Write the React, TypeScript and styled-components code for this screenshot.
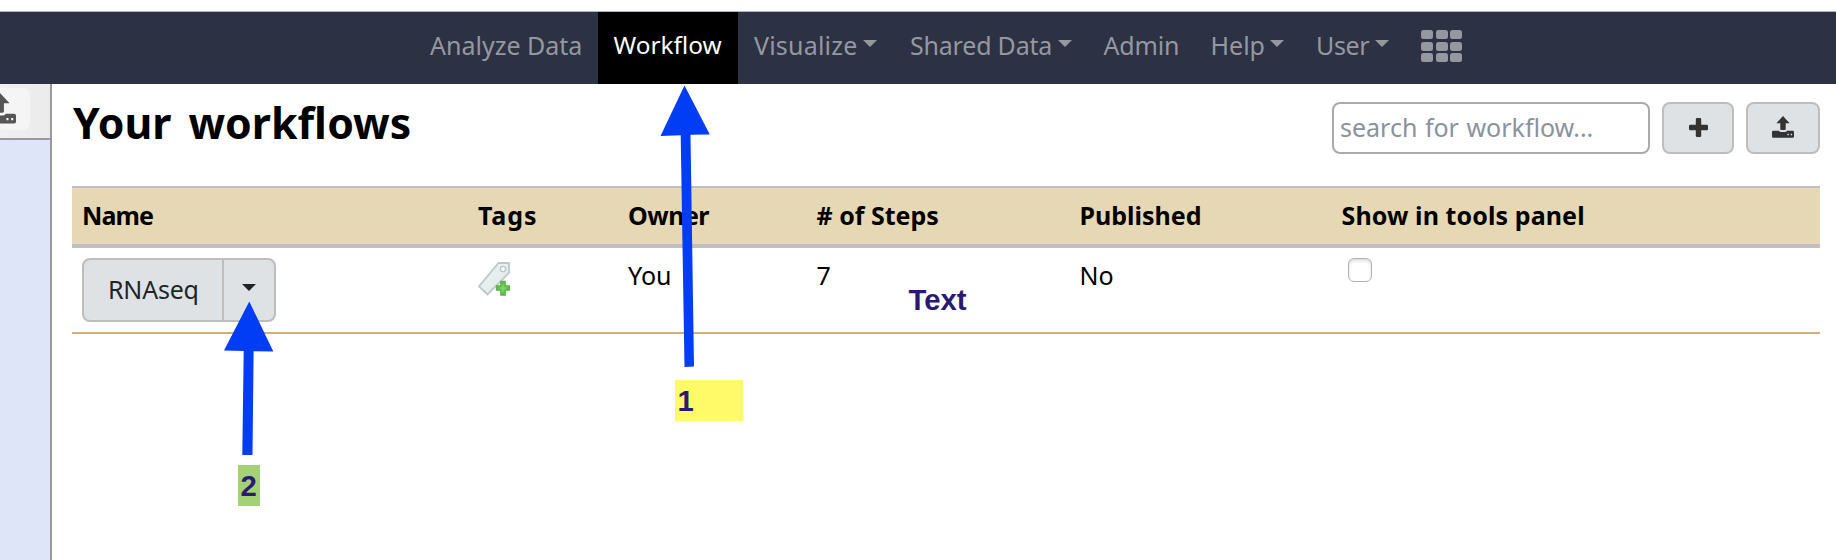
import React from "react";
import styled, { createGlobalStyle, css } from "styled-components";

const Global = createGlobalStyle`
  * { box-sizing: border-box; }
  body { margin: 0; background: #fff; color: #000; font: 25px/36px "Noto Sans", "Open Sans", sans-serif; }
  #root { height: 560px; overflow: hidden; }
`;

const Page = styled.div`
  position: relative;
  height: 560px;
  display: flex;
  flex-direction: column;
  overflow: hidden;
`;

const Masthead = styled.header`
  flex: none;
  height: 73px;
  margin-top: 11px;
  padding-left: 415px;
  border-top: 1px solid #b4b6bd;
  background: #2c3143;
  display: flex;
`;

const NavItem = styled.a<{ $width: number; $active?: boolean; $size?: number; $tracking?: number }>`
  width: ${(p) => p.$width}px;
  margin-right: ${(p) => (p.$active ? 1 : 0)}px;
  padding: 15px 0 0 ${(p) => (p.$active ? 15.5 : 15)}px;
  height: 72px;
  display: flex;
  white-space: pre;
  color: ${(p) => (p.$active ? "#fff" : "#9598a1")};
  background: ${(p) => (p.$active ? "#000" : "transparent")};
  font-size: ${(p) => p.$size ?? 25}px;
  letter-spacing: ${(p) => (p.$tracking ? `${p.$tracking}px` : "normal")};
`;

const Caret = styled.span`
  width: 0;
  height: 0;
  margin: 13px 0 0 5.5px;
  border: 7px solid transparent;
  border-top: 7.5px solid currentColor;
  border-bottom: 0;
`;

const AppGrid = styled.div`
  display: grid;
  grid-template-columns: repeat(3, 12px);
  grid-auto-rows: 9px;
  gap: 2.7px;
  margin: 18px 0 0 15px;
`;

const AppCell = styled.i`
  background: #9598a1;
  border-radius: 2.5px;
`;

const Body = styled.div`
  flex: 1;
  display: flex;
  min-height: 0;
`;

const Sidebar = styled.aside`
  width: 52px;
  border-right: 2px solid #999;
  background: #dfe5f9;
`;

const SidebarHead = styled.div`
  height: 56px;
  padding-top: 4px;
  border-bottom: 2px solid #999;
  background: linear-gradient(90deg, #f0f0f0, #ebebeb);
`;

const SidebarButton = styled.div`
  width: 30px;
  height: 42px;
  padding: 5px 14px 0 0;
  border-radius: 0 7px 7px 0;
  background: #f5f5f5;
  color: #555;
  overflow: hidden;
  display: flex;
  justify-content: flex-end;
`;

const Main = styled.main`
  flex: 1;
  padding: 18px 16px 0 20px;
`;

const TitleBar = styled.div`
  display: flex;
  align-items: flex-start;
  height: 84px;
`;

const Title = styled.h1`
  flex: 1;
  margin: -5px 0 0 1px;
  font-size: 42.8px;
  line-height: 52px;
  word-spacing: 6px;
`;

const Search = styled.input`
  width: 318px;
  height: 52px;
  padding: 0 0 3px 6px;
  border: 2px solid #aaa;
  border-radius: 8px;
  background: #fff;
  font: inherit;
  word-spacing: 1px;
  outline: none;
  &::placeholder { color: #8a929b; opacity: 1; }
`;

const buttonFace = css`
  border: 2px solid #bdbdbd;
  background: #dee2e5;
  color: #212529;
`;

const ToolButton = styled.button<{ $width: number }>`
  ${buttonFace}
  width: ${(p) => p.$width}px;
  height: 52px;
  margin-left: 12px;
  padding: 0 0 2px;
  border-radius: 8px;
  color: #333;
  display: flex;
  align-items: center;
  justify-content: center;
`;

const Table = styled.div`
  border-top: 2px solid #bfbfbf;
`;

const Row = styled.div<{ $head?: boolean }>`
  display: grid;
  grid-template-columns: 396px 150px 188.5px 263px 262px 1fr;
  padding-left: 10px;
  height: ${(p) => (p.$head ? 60 : 86)}px;
  border-bottom: ${(p) => (p.$head ? "4px solid #bfbfbf" : "2px solid #d3b06c")};
  background: ${(p) => (p.$head ? "#e7d8b5" : "#fff")};
  font-weight: ${(p) => (p.$head ? 700 : 400)};
`;

const Cell = styled.div<{ $top: number; $tracking?: number }>`
  padding-top: ${(p) => p.$top}px;
  letter-spacing: ${(p) => (p.$tracking ? `${p.$tracking}px` : "normal")};
  white-space: nowrap;
`;

const ButtonGroup = styled.div`
  ${buttonFace}
  display: flex;
  width: 194px;
  height: 64px;
  border-radius: 8px;
`;

const GroupName = styled.div`
  width: 140px;
  padding: 11px 0 0 24px;
  border-right: 2px solid #bdbdbd;
  letter-spacing: -0.2px;
`;

const GroupToggle = styled.div`
  flex: 1;
  display: flex;
  padding: 11px 0 0 12.5px;
`;

const Checkbox = styled.div`
  width: 24px;
  height: 24px;
  margin-left: 6.5px;
  border: 1.5px solid #b0b0b0;
  border-radius: 6px;
  box-shadow: inset 0 2px 3px #ddd;
`;

const Arrows = styled.svg`
  position: absolute;
  inset: 0;
  pointer-events: none;
`;

const Note = styled.div<{ $x: number; $y: number; $w: number; $fill?: string }>`
  position: absolute;
  left: ${(p) => p.$x}px;
  top: ${(p) => p.$y}px;
  width: ${(p) => p.$w}px;
  height: 41px;
  padding-left: 2.5px;
  background: ${(p) => p.$fill ?? "transparent"};
  color: #2a1a73;
  font: bold 29.3px/41px "Liberation Sans", sans-serif;
`;

const IconSvg = styled.svg`
  display: block;
  flex: none;
`;

function UploadIcon({ width, height }: { width: number; height: number }) {
  return (
    <IconSvg width={width} height={height} viewBox="0 0 22 22" preserveAspectRatio="none">
      <path
        fill="currentColor"
        fillRule="evenodd"
        d="M11 0 17.6 7.2H13.7V13.2Q13.7 14 12.9 14H9.1Q8.3 14 8.3 13.2V7.2H4.4ZM1.3 14.8H7Q7.6 16 9 16H13Q14.4 16 15 14.8H20.7Q22 14.8 22 16.1V20.4Q22 21.7 20.7 21.7H1.3Q0 21.7 0 20.4V16.1Q0 14.8 1.3 14.8ZM15.4 17.8V19.3H16.8V17.8ZM18.7 17.8V19.3H20.1V17.8Z"
      />
    </IconSvg>
  );
}

function PlusIcon() {
  return (
    <IconSvg width="19" height="19" viewBox="0 0 19 19">
      <path fill="currentColor" d="M8 0h3q1.2 0 1.2 1.2v5.6h5.6q1.2 0 1.2 1.2v3q0 1.2-1.2 1.2h-5.6v5.6q0 1.2-1.2 1.2H8q-1.2 0-1.2-1.2v-5.6H1.2Q0 12.2 0 11V8q0-1.2 1.2-1.2h5.6V1.2Q6.8 0 8 0z" />
    </IconSvg>
  );
}

function TagIcon() {
  return (
    <IconSvg width="32" height="34" viewBox="0 0 32 34">
      <defs>
        <linearGradient id="tagFace" x1="0" y1="0" x2="1" y2="1">
          <stop offset="0" stopColor="#f3f7f7" />
          <stop offset="1" stopColor="#dbe5e6" />
        </linearGradient>
        <radialGradient id="addFace">
          <stop offset="0" stopColor="#83dc68" />
          <stop offset="1" stopColor="#50b83f" />
        </radialGradient>
      </defs>
      <path d="M20.5 1H31V11L9.5 32.5 1 24.5Z" fill="url(#tagFace)" stroke="#bcc8ca" strokeWidth="1.8" />
      <circle cx="25" cy="7" r="2.6" fill="#fff" stroke="#b8c5c7" strokeWidth="1.4" />
      <path d="M22.8 19.5h4.4v4.3h4.300v4.400h-4.300v5h-4.400v-5h-4.300v-4.400h4.300z" fill="url(#addFace)" stroke="#5fb350" strokeWidth="1.3" />
    </IconSvg>
  );
}

export default function App() {
  return (
    <Page>
      <Global />
      <Masthead>
        <NavItem $width={183}>Analyze Data</NavItem>
        <NavItem $width={140} $active $size={24.4}>Workflow</NavItem>
        <NavItem $width={156} $tracking={0.2}>Visualize<Caret /></NavItem>
        <NavItem $width={193.5} $tracking={-0.2}>Shared Data<Caret /></NavItem>
        <NavItem $width={107} $tracking={-0.2}>Admin</NavItem>
        <NavItem $width={105.5}>Help<Caret /></NavItem>
        <NavItem $width={105} $tracking={-0.4}>User<Caret /></NavItem>
        <AppGrid>
          {Array.from({ length: 9 }, (_, i) => <AppCell key={i} />)}
        </AppGrid>
      </Masthead>
      <Body>
        <Sidebar>
          <SidebarHead>
            <SidebarButton><UploadIcon width={32} height={31} /></SidebarButton>
          </SidebarHead>
        </Sidebar>
        <Main>
          <TitleBar>
            <Title>Your workflows</Title>
            <Search placeholder="search for workflow..." />
            <ToolButton $width={72}><PlusIcon /></ToolButton>
            <ToolButton $width={74}><UploadIcon width={22} height={22} /></ToolButton>
          </TitleBar>
          <Table>
            <Row $head>
              <Cell $top={9} $tracking={-0.9}>Name</Cell>
              <Cell $top={9} $tracking={0.9}>Tags</Cell>
              <Cell $top={9} $tracking={-0.5}>Owner</Cell>
              <Cell $top={9}># of Steps</Cell>
              <Cell $top={9}>Published</Cell>
              <Cell $top={9} $tracking={0.1}>Show in tools panel</Cell>
            </Row>
            <Row>
              <Cell $top={10}>
                <ButtonGroup>
                  <GroupName>RNAseq</GroupName>
                  <GroupToggle><Caret /></GroupToggle>
                </ButtonGroup>
              </Cell>
              <Cell $top={14}><TagIcon /></Cell>
              <Cell $top={9}>You</Cell>
              <Cell $top={9}>7</Cell>
              <Cell $top={9}>No</Cell>
              <Cell $top={10}><Checkbox /></Cell>
            </Row>
          </Table>
        </Main>
      </Body>
      <Arrows width="1836" height="560" fill="#003df5">
        <path d="M684.5 85.5 709.8 134.5 690.5 134.8 694 366.5 684.5 367 680.7 135.3 660.5 136Z" />
        <path d="M249.3 301.5 273.3 351.5 253.6 351.3 252.5 455 242.3 455 243.7 351 224 350.5Z" />
      </Arrows>
      <Note $x={906} $y={279} $w={70}>Text</Note>
      <Note $x={675} $y={380} $w={68} $fill="#fffa68">1</Note>
      <Note $x={238} $y={465} $w={21.5} $fill="#a3d173">2</Note>
    </Page>
  );
}
